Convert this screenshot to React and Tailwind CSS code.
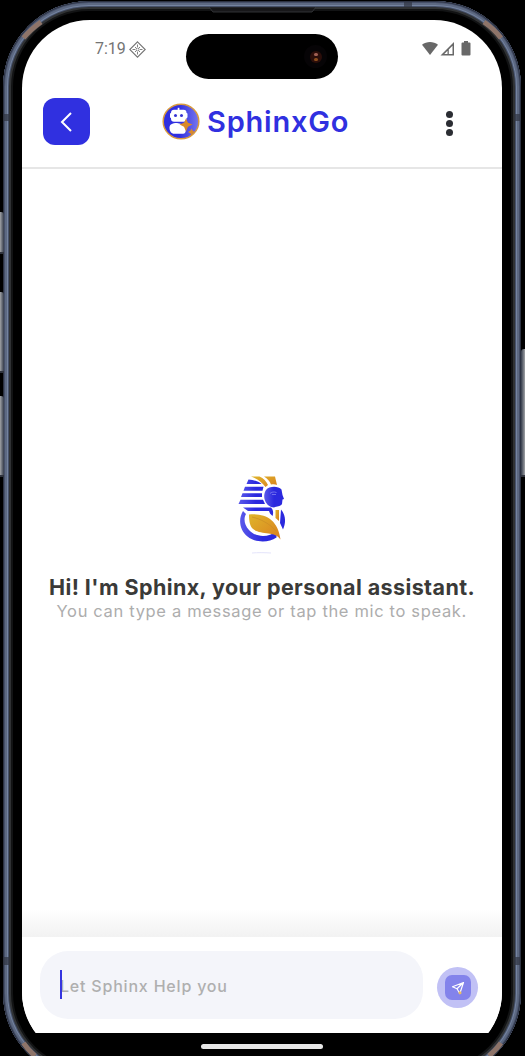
import React from "react";

function StatusBar() {
  return (
    <div className="flex h-[58px] items-center justify-between pr-[31px] pl-[73px]">
      <div className="flex items-center gap-[3px] text-[#747474]">
        <span className="w-[31px] font-[Roboto,sans-serif] text-[16px] leading-5 whitespace-nowrap">7:19</span>
        <svg width="17" height="17" viewBox="0 0 17 17" fill="none" stroke="#747474" strokeWidth="1.1">
          <path d="M8.5 .8 16.200 8.500 8.500 16.200 .8 8.500Z" />
          <path d="M8.5 3.500v2.500M8.500 11v2.500M3.500 8.500H6M11 8.500h2.500M6 6l1.500 1.500M11 6 9.500 7.500M6 11l1.500-1.500M11 11 9.500 9.500" strokeWidth=".9" />
          <circle cx="8.500" cy="8.500" r="1.500" strokeWidth=".8" />
        </svg>
      </div>
      <svg width="49" height="16" viewBox="0 0 49 16" fill="#686868">
        <path d="M0 3.8C4.5 0 11.500 0 16 3.800L8 14Z" />
        <path d="M32 1v13.500H18.500Z" />
        <path d="M25.500 9.800V13H22.300ZM26.800 8.500 30.500 4.800V13H26.800Z" fill="#fff" />
        <path d="M42 0h4v1.500h1.500a1 1 0 0 1 1 1v11a1 1 0 0 1-1 1h-7a1 1 0 0 1-1-1V2.500a1 1 0 0 1 1-1H42Z" />
      </svg>
    </div>
  );
}

function BotLogo() {
  return (
    <svg width="38" height="37" viewBox="0 0 38 37">
      <defs>
        <linearGradient id="bot" x1="0" x2="1">
          <stop offset=".45" stopColor="#302fe0" />
          <stop offset="1" stopColor="#7877ed" />
        </linearGradient>
      </defs>
      <ellipse cx="19" cy="18.500" rx="17.800" ry="17.300" fill="url(#bot)" stroke="#d99b3e" strokeWidth="1.500" />
      <g fill="#fff">
        <rect x="15.700" y="4.800" width="1.700" height="4" />
        <rect x="9" y="6.800" width="15.500" height="12" rx="3" />
        <rect x="8" y="10" width="17.500" height="5" rx="1" />
        <path d="M7.500 24.500c0-3 2.500-4.500 7.500-4.500l9 2v4c0 3-1 4.800-3 4.800h-8.500C9 30.800 7.500 28 7.500 24.500Z" />
      </g>
      <circle cx="13.500" cy="12.500" r="1.500" fill="#3734d4" />
      <circle cx="19.500" cy="12.500" r="1.500" fill="#3734d4" />
      <path d="M24 15.500 26 19.800 30.500 21.500 26 23.700 24 28.500 22 23.700 17.500 21.500 22 19.800Z" fill="#d98929" />
      <path d="M29.500 25.500 30.700 27.800 33 29 30.700 30.200 29.500 32.500 28.300 30.200 26 29 28.300 27.800Z" fill="#d98929" />
    </svg>
  );
}

function Header() {
  return (
    <header className="flex h-[91px] items-start border-b-2 border-[#e6e6e6] pt-5 pr-[45px] pl-[21px]">
      <button aria-label="Back" className="flex h-[47px] w-[47px] shrink-0 items-center justify-center rounded-[12px] bg-[#3030e0]">
        <svg width="14" height="20" viewBox="0 0 14 20" fill="none" stroke="#fff" strokeWidth="2">
          <path d="M11 1 2 10 11 19" />
        </svg>
      </button>
      <div className="ml-[72px] flex h-[47px] items-center gap-[7px]">
        <BotLogo />
        <h1 className="w-[143px] font-[Inter,sans-serif] text-[29px] leading-none font-semibold tracking-[0.8px] whitespace-nowrap text-[#3030e0]">SphinxGo</h1>
      </div>
      <button aria-label="More" className="ml-auto flex h-[50px] w-[16px] flex-col items-center justify-center gap-[2px]">
        <span className="h-[7px] w-[7px] rounded-full bg-[#2b2d33]" />
        <span className="h-[7px] w-[7px] rounded-full bg-[#2b2d33]" />
        <span className="h-[7px] w-[7px] rounded-full bg-[#2b2d33]" />
      </button>
    </header>
  );
}

function SphinxLogo() {
  return (
    <svg width="85" height="95" viewBox="0 0 85 95">
      <defs>
        <linearGradient id="gold" x1="0" x2="1" y2="1">
          <stop offset="0" stopColor="#dfb52b" />
          <stop offset="1" stopColor="#d9801e" />
        </linearGradient>
        <linearGradient id="blue" x1="0" x2="1">
          <stop offset="0" stopColor="#5a59ea" />
          <stop offset=".5" stopColor="#2b29de" />
        </linearGradient>
      </defs>
      <g fill="url(#gold)">
        <path d="M31 11.500h8.500c4 1.500 7 5 8.500 8.500l-2.500 2C42 17 37 13.500 31 11.500ZM44 11.500h11l2 8.500c-2-1-4-1-6-.5-1-3-3.500-6-7-8Z" />
        <path d="M55.500 45h3.500v11l-3.500-3Z" />
      </g>
      <g fill="url(#blue)">
        <path d="M28.500 14.500c5 .2 10 2 13 4.500H26.500ZM25 21.700H43.500L42.500 25.800H23.500ZM22.500 28.300H42V32H21ZM20.500 34.700H43L45 39H18.500ZM23 42.500h28c2.500 2.500 2.500 6 1.500 8.500l-2.500-2.500-1-2.500H28Z" />
        <path d="M46 25c3-4 12-4.500 15.500-.5l1 5.500 1.500 4-1.500.5-.5 4.500c-2 3-5 2-8 3.500C46 42 41.500 32 46 25Z" />
        <path d="M23 46c-5 8-3.500 19 4.500 25.500 8 6.500 21 6.500 29 1V66c-8 7-21 6.500-27.500-1C24 60 23.500 53 26 49ZM61 44.500c5 6 5 13 2 20L60 58Z" />
      </g>
      <path d="M29 49.500c16-1.500 29 5 31.500 25-5-9-20.500-4-28-11-3-3-3.500-9-3.500-14Z" fill="url(#gold)" />
      <path d="M32 52c9 2 18 7 24 14" fill="none" stroke="#c68a25" strokeWidth=".6" />
      <path d="M50 28.500c1.500-1.500 4-2 6.500-1M52 29.500h4" fill="none" stroke="#8b8bf4" strokeWidth=".7" />
      <path d="M32 88c6-.5 12-.5 19 0" fill="none" stroke="#e4e4fb" />
    </svg>
  );
}

function Welcome() {
  return (
    <main className="flex h-[768px] flex-col items-center bg-white pt-[296px]">
      <SphinxLogo />
      <h2 className="mt-[14px] w-[426px] font-[Inter,sans-serif] text-[21.5px] leading-[26px] font-bold tracking-[0.4px] whitespace-nowrap text-[#3a3a38]">
        Hi! I'm Sphinx, your personal assistant.
      </h2>
      <p className="w-[411px] font-[Inter,sans-serif] text-[16.5px] leading-[23px] tracking-[0.66px] whitespace-nowrap text-[#adadad]">
        You can type a message or tap the mic to speak.
      </p>
      <div className="mt-auto h-[28px] w-full bg-linear-to-b from-white to-[#f2f2f2]" />
    </main>
  );
}

function Composer() {
  return (
    <footer className="flex h-[96px] items-start bg-white pt-[14px] pl-[18px]">
      <div className="flex h-[68px] w-[383px] items-center rounded-[28px] bg-[#f4f5fa] pl-[20px]">
        <div className="relative flex h-[30px] items-center pt-[2px]">
          <span className="font-[Inter,sans-serif] text-[16px] leading-6 font-medium tracking-[0.8px] whitespace-nowrap text-[#afafaf]">Let Sphinx Help you</span>
          <span className="absolute top-0 left-0 h-[29px] w-[2px] bg-[#3535df]" />
        </div>
      </div>
      <button aria-label="Send" className="mt-4 ml-[14px] flex h-[41px] w-[41px] items-center justify-center rounded-full bg-[#c1c1f5]">
        <span className="flex h-[25px] w-[26px] items-center justify-center rounded-[7px] bg-[#8383eb]">
          <svg width="14" height="14" viewBox="0 0 14 14" fill="none" stroke="#fff" strokeWidth="1.200" strokeLinejoin="round">
            <path d="M12.500 1.500 1.500 5.800 6 7.800 8.800 12.500ZM6 7.800 12.500 1.500" />
            <circle cx="9" cy="11.800" r="1.500" fill="#ecc064" stroke="none" />
          </svg>
        </span>
      </button>
    </footer>
  );
}

function DynamicIsland() {
  return (
    <div className="absolute top-[14px] left-[164px] flex h-[45px] w-[152px] items-center justify-end rounded-full bg-black pr-[11px]">
      <span className="flex h-[23px] w-[23px] items-center justify-center rounded-full bg-[#060406]">
        <span className="flex h-[12px] w-[12px] flex-col items-center justify-center gap-[2px] rounded-full bg-[#2b0e0a]">
          <span className="h-[3px] w-[4px] rounded-full bg-[#a06054]" />
          <span className="h-[3px] w-[4px] rounded-full bg-[#8a4c1c]" />
        </span>
      </span>
    </div>
  );
}

function SideButtons() {
  return (
    <>
      <span className="absolute top-[212px] left-0 h-[42px] w-[4px] rounded-tr-[3px] border-b-2 border-[#30343e] bg-linear-to-r from-[#a2a4a7] to-[#353c4b]" />
      <span className="absolute top-[292px] left-0 h-[81px] w-[4px] rounded-tr-[3px] border-b-2 border-[#30343e] bg-linear-to-r from-[#a2a4a7] to-[#353c4b]" />
      <span className="absolute top-[396px] left-0 h-[81px] w-[4px] rounded-tr-[3px] border-b-2 border-[#30343e] bg-linear-to-r from-[#a2a4a7] to-[#353c4b]" />
      <span className="absolute top-[349px] right-0 h-[128px] w-[4px] rounded-tl-[3px] border-b-2 border-[#30343e] bg-linear-to-l from-[#a2a4a7] to-[#353c4b]" />
    </>
  );
}

function FrameDetails() {
  return (
    <>
      <span className="absolute top-[114px] left-[3px] h-[7px] w-[7px] bg-[#303541]/70" />
      <span className="absolute top-[114px] right-[4px] h-[7px] w-[7px] bg-[#303541]/70" />
      <span className="absolute top-[957px] left-[3px] h-[8px] w-[7px] bg-[#303541]/70" />
      <span className="absolute top-[957px] right-[4px] h-[8px] w-[7px] bg-[#303541]/70" />
      <span className="absolute top-[2px] left-[404px] h-[5px] w-[8px] bg-[#303541]/70" />
      <svg className="absolute top-[7px] left-[208px]" width="109" height="6" viewBox="0 0 109 6">
        <path d="M1 0h107l-4 5H5Z" fill="#171719" stroke="#3a3c3f" strokeWidth=".8" />
      </svg>
      <svg className="absolute top-0 left-0" width="525" height="1056" viewBox="0 0 525 1056" fill="none" stroke="#8e7469" strokeWidth="5">
        <path d="M23.500 38Q30 30 41 22M484 22Q494 29 501 38M23.500 1043Q28 1050 35 1056M501 1043Q496 1050 489 1056" />
      </svg>
    </>
  );
}

export default function App() {
  return (
    <div className="relative h-[1056px] w-[525px] overflow-hidden bg-black">
      <SideButtons />
      <div className="mt-px ml-[3px] h-[1078px] w-[518px] rounded-[86px] bg-black p-[19px] shadow-[inset_0_0_0_1px_#2c3242,inset_0_0_0_2px_#465069,inset_0_0_0_4px_#5d6982,inset_0_0_0_5px_#74839f,inset_0_0_0_6px_#46516a,inset_0_0_0_8px_#303234,inset_0_0_0_10px_#121314]">
        <div className="relative h-[1040px] w-[480px] overflow-hidden rounded-[68px] bg-black">
          <div className="h-[1013px] overflow-hidden bg-white">
            <StatusBar />
            <Header />
            <Welcome />
            <Composer />
          </div>
          <div className="flex h-[27px] justify-center pt-[11px]">
            <span className="h-[5px] w-[122px] rounded-full bg-[#e7e7e7]" />
          </div>
          <DynamicIsland />
        </div>
      </div>
      <FrameDetails />
    </div>
  );
}
